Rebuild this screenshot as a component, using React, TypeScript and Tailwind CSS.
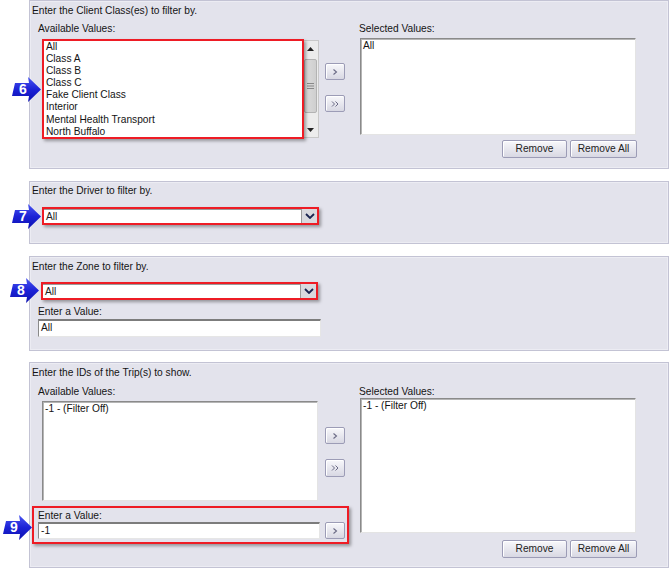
import React from "react";

const Chev = ({ double }: { double?: boolean }) => (
  <svg width="10" height="8" viewBox="0 0 10 8">
    {double ? (
      <>
        <polyline points="2,1.5 4.5,4 2,6.5" fill="none" stroke="#6a6a85" strokeWidth="1" />
        <polyline points="5.5,1.5 8,4 5.5,6.5" fill="none" stroke="#6a6a85" strokeWidth="1" />
      </>
    ) : (
      <polyline points="3.5,1.5 6.5,4 3.5,6.5" fill="none" stroke="#6a6a85" strokeWidth="1.1" />
    )}
  </svg>
);

const Btn = ({ children, className }: { children: React.ReactNode; className: string }) => (
  <div
    className={`flex items-center justify-center border border-[#9c9cb6] rounded-[2px] bg-gradient-to-b from-[#f8f8fb] to-[#d8d8e3] text-[#222] shadow-[inset_1px_1px_0_#ffffff] ${className}`}
  >
    {children}
  </div>
);

const Marker = ({ n, className }: { n: string; className: string }) => (
  <div className={`absolute w-[29px] h-[25px] ${className}`}>
    <svg width="29" height="25" viewBox="0 0 29 25" className="absolute left-0 top-0">
      <defs>
        <linearGradient id={`mg${n}`} x1="0" y1="0" x2="0" y2="1">
          <stop offset="0" stopColor="#4a55f2" />
          <stop offset="0.5" stopColor="#1c22d6" />
          <stop offset="1" stopColor="#0c10b0" />
        </linearGradient>
      </defs>
      <polygon points="3,6 17,6 16,0 29,12.5 16,25 17,19 0,19" fill={`url(#mg${n})`} />
    </svg>
    <div className="absolute left-[4px] top-[5px] w-[14px] text-center text-white font-bold text-[14px] leading-[15px]">
      {n}
    </div>
  </div>
);

const Panel = ({ children, className }: { children: React.ReactNode; className: string }) => (
  <div className={`w-[640px] border border-[#c3c3d4] bg-[#e3e3ec] shadow-[inset_0_0_0_1px_#ececf3] ${className}`}>
    {children}
  </div>
);

const ListBox = ({ items, className }: { items: string[]; className: string }) => (
  <div className={`bg-white border border-[#8a8a8a] border-r-[#e4e4e4] border-b-[#e4e4e4] shadow-[inset_1px_1px_0_#b5b5b5] pl-[2px] pt-[1px] ${className}`}>
    {items.map((t) => (
      <div key={t} className="leading-[12px] whitespace-nowrap">
        {t}
      </div>
    ))}
  </div>
);

const Select = () => (
  <div className="w-[277px] h-[18px] border-2 border-[#ee1c25] shadow-[2px_2px_3px_rgba(0,0,0,0.35)] bg-white flex">
    <div className="flex-1 pl-[2px] leading-[14px] border-t border-[#9a9a9a] text-[#222]">All</div>
    <div className="w-[16px] h-[14px] bg-[#d9d9de] border-l border-[#9a9a9a] flex items-center justify-center">
      <svg width="10" height="6" viewBox="0 0 10 6">
        <polyline points="1,1 5,5 9,1" fill="none" stroke="#1a2450" strokeWidth="1.8" />
      </svg>
    </div>
  </div>
);

const Input = ({ value, className }: { value: string; className: string }) => (
  <div className={`bg-white border border-[#8a8a8a] border-r-[#e6e6e6] border-b-[#e6e6e6] border-t-2 border-t-[#7c7c7c] pl-[2px] leading-[13px] ${className}`}>
    {value}
  </div>
);

const RemoveButtons = ({ className }: { className: string }) => (
  <div className={`flex justify-end gap-[3px] w-[278px] ${className}`}>
    <Btn className="w-[65px] h-[18px]">Remove</Btn>
    <Btn className="w-[67px] h-[18px]">Remove All</Btn>
  </div>
);

export default function App() {
  return (
    <div className="relative w-[670px] h-[569px] bg-white overflow-hidden font-['Liberation_Sans',Arial,sans-serif] text-[10.2px] leading-[12px] text-[#141414]">
      <div className="flex flex-col pl-[29px]">
        {/* Panel 1 */}
        <Panel className="h-[169px]">
          <div className="pl-[2px] pt-[4px]">Enter the Client Class(es) to filter by.</div>
          <div className="flex mt-[6px]">
            <div className="ml-[8px] w-[287px]">
              <div>Available Values:</div>
              <div className="relative ml-[5px] mt-[5px] w-[276px] h-[98px] bg-white border border-[#c8c8c8] flex">
                <div className="flex-1 pl-[2px] pt-[0px]">
                  {["All", "Class A", "Class B", "Class C", "Fake Client Class", "Interior", "Mental Health Transport", "North Buffalo"].map((t) => (
                    <div key={t} className="leading-[12.1px] whitespace-nowrap">
                      {t}
                    </div>
                  ))}
                </div>
                <div className="w-[15px] h-full bg-[#ececec] flex flex-col items-center">
                  <div className="h-[16px] flex items-center justify-center">
                    <svg width="7" height="4" viewBox="0 0 7 4"><polygon points="0,4 3.5,0 7,4" fill="#222" /></svg>
                  </div>
                  <div className="mt-[2px] w-[13px] h-[54px] rounded-[2px] border border-[#b3b3b3] bg-gradient-to-r from-[#dcdcdc] to-[#cfcfcf] flex items-center justify-center">
                    <svg width="7" height="6" viewBox="0 0 7 6">
                      <line x1="0" y1="0.5" x2="7" y2="0.5" stroke="#888" />
                      <line x1="0" y1="3" x2="7" y2="3" stroke="#888" />
                      <line x1="0" y1="5.5" x2="7" y2="5.5" stroke="#888" />
                    </svg>
                  </div>
                  <div className="flex-1" />
                  <div className="h-[14px] flex items-center justify-center">
                    <svg width="7" height="4" viewBox="0 0 7 4"><polygon points="0,0 3.5,4 7,0" fill="#222" /></svg>
                  </div>
                </div>
                <div className="absolute -left-[2px] -top-[2px] w-[262px] h-[100px] border-2 border-[#ee1c25] shadow-[2px_2px_3px_rgba(0,0,0,0.35)]" />
              </div>
            </div>
            <div className="w-[20px] flex flex-col">
              <Btn className="mt-[40px] w-[20px] h-[17px]"><Chev /></Btn>
              <Btn className="mt-[15px] w-[20px] h-[17px]"><Chev double /></Btn>
            </div>
            <div className="ml-[14px]">
              <div>Selected Values:</div>
              <ListBox items={["All"]} className="ml-[1px] mt-[3px] w-[276px] h-[97px]" />
              <RemoveButtons className="mt-[5px]" />
            </div>
          </div>
        </Panel>

        {/* Panel 2 */}
        <Panel className="h-[63px] mt-[12px]">
          <div className="pl-[2px] pt-[3px]">Enter the Driver to filter by.</div>
          <div className="ml-[12px] mt-[10px]">
            <Select />
          </div>
        </Panel>

        {/* Panel 3 */}
        <Panel className="h-[95px] mt-[12px]">
          <div className="pl-[2px] pt-[4px]">Enter the Zone to filter by.</div>
          <div className="ml-[11px] mt-[9px]">
            <Select />
          </div>
          <div className="ml-[8px] mt-[6px]">Enter a Value:</div>
          <Input value="All" className="ml-[8px] mt-[1px] w-[283px] h-[18px]" />
        </Panel>

        {/* Panel 4 */}
        <Panel className="h-[206px] mt-[11px]">
          <div className="pl-[2px] pt-[4px]">Enter the IDs of the Trip(s) to show.</div>
          <div className="flex mt-[7px]">
            <div className="flex flex-col w-[315px]">
              <div className="flex">
                <div className="ml-[8px] w-[287px]">
                  <div>Available Values:</div>
                  <ListBox items={["-1 - (Filter Off)"]} className="ml-[4px] mt-[3px] w-[276px] h-[100px]" />
                </div>
                <div className="w-[20px] flex flex-col">
                  <Btn className="mt-[41px] w-[20px] h-[17px]"><Chev /></Btn>
                  <Btn className="mt-[15px] w-[20px] h-[18px]"><Chev double /></Btn>
                </div>
              </div>
              <div className="ml-[2px] mt-[5px] w-[317px] h-[38px] border-2 border-[#ee1c25] shadow-[2px_2px_3px_rgba(0,0,0,0.35)] pl-[4px] pt-[2px]">
                <div>Enter a Value:</div>
                <div className="flex">
                  <Input value="-1" className="w-[282px] h-[17px]" />
                  <Btn className="ml-[5px] w-[20px] h-[17px]"><Chev /></Btn>
                </div>
              </div>
            </div>
            <div className="ml-[14px]">
              <div>Selected Values:</div>
              <ListBox items={["-1 - (Filter Off)"]} className="ml-[1px] mt-[0px] w-[276px] h-[135px]" />
              <RemoveButtons className="mt-[7px]" />
            </div>
          </div>
        </Panel>
      </div>

      <Marker n="6" className="left-[12px] top-[77px]" />
      <Marker n="7" className="left-[12px] top-[204px]" />
      <Marker n="8" className="left-[10px] top-[278px]" />
      <Marker n="9" className="left-[3px] top-[515px]" />
    </div>
  );
}
